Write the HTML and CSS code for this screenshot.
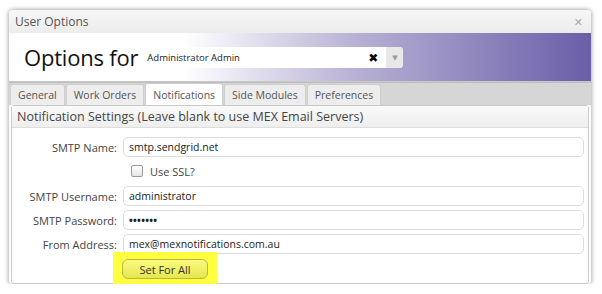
FILE: index.html
```html
<!DOCTYPE html>
<html lang="en">
<head>
    <meta charset="UTF-8">
    <title>User Options</title>
    <link rel="stylesheet" href="styles.css">
</head>
<body>
    <div class="dialog">
        <div class="titlebar">
            <span>User Options</span>
            <span class="close">&#x2715;</span>
        </div>

        <!-- header with user picker -->
        <div class="header">
            <span class="options-for">Options for</span>
            <div class="picker">
                <span class="picker-value">Administrator Admin</span>
                <span class="picker-clear">&#x2716;</span>
                <span class="picker-arrow">&#x25BC;</span>
            </div>
        </div>

        <div class="tabs">
            <div class="tab">General</div>
            <div class="tab">Work Orders</div>
            <div class="tab active">Notifications</div>
            <div class="tab">Side Modules</div>
            <div class="tab">Preferences</div>
        </div>

        <div class="panel">
            <div class="panel-head">Notification Settings (Leave blank to use MEX Email Servers)</div>
            <div class="form">
                <div class="row">
                    <label>SMTP Name:</label>
                    <div class="field">smtp.sendgrid.net</div>
                </div>
                <div class="row check-row">
                    <label></label>
                    <span class="checkbox"></span>
                    <span>Use SSL?</span>
                </div>
                <div class="row">
                    <label>SMTP Username:</label>
                    <div class="field">administrator</div>
                </div>
                <div class="row">
                    <label>SMTP Password:</label>
                    <div class="field dots">&#8226;&#8226;&#8226;&#8226;&#8226;&#8226;&#8226;</div>
                </div>
                <div class="row">
                    <label>From Address:</label>
                    <div class="field">mex@mexnotifications.com.au</div>
                </div>
                <div class="row button-row">
                    <label></label>
                    <div class="highlight">
                        <button>Set For All</button>
                    </div>
                </div>
            </div>
        </div>
    </div>
</body>
</html>
```

FILE: styles.css
```css
body { margin: 0; background: #fff; font-family: "Open Sans", "DejaVu Sans", sans-serif; color: #333; }
.dialog { margin: 10px 0 0 9px; width: 582px; height: 274px; border-radius: 4px; box-shadow: 0 0 5px rgba(0,0,0,0.45); background: #fff; overflow: hidden; }

.titlebar { height: 23px; display: flex; align-items: center; justify-content: space-between; padding: 0 8px 0 6px; background: linear-gradient(#f7f7f7, #ececec); font-size: 12px; color: #555; }
.close { font-size: 11px; color: #aaa; }

.header { height: 48px; display: flex; align-items: center; padding-left: 15px; background: linear-gradient(to right, #fff 30%, #b7b0d4 60%, #6a5ea8 100%); border-bottom: 1px solid #c8c8c8; }
.options-for { font-size: 22px; color: #111; margin-right: 5px; letter-spacing: -0.2px; }
.picker { display: flex; align-items: center; height: 21px; width: 260px; border-radius: 4px; background: #fff; overflow: hidden; }
.picker-value { flex: 1; font-size: 9.5px; padding-left: 4px; color: #222; }
.picker-clear { font-size: 12px; font-weight: bold; color: #000; margin-right: 8px; }
.picker-arrow { width: 17px; height: 21px; background: #e8e8e8; color: #999; font-size: 7px; display: flex; align-items: center; justify-content: center; }

.tabs { display: flex; height: 22px; padding: 0 0 0 1px; background: #d6d6d6; border-top: 1px solid #bdbdbd; align-items: flex-end; }
.tab { height: 20px; padding: 0 7px; margin-right: 1px; background: #ededed; border: 1px solid #cfcfcf; border-bottom: none; border-radius: 3px 3px 0 0; font-size: 10.5px; color: #555; display: flex; align-items: center; }
.tab.active { background: #fff; height: 21px; }

.panel { margin: 0 2px; border: 1px solid #c9c9c9; border-radius: 3px; height: 177px; }
.panel-head { height: 21px; display: flex; align-items: center; padding-left: 5px; background: linear-gradient(#fafafa, #eeeeee); border-bottom: 1px solid #dedede; font-size: 12.5px; color: #444; }
.form { padding-top: 9px; }

.row { display: flex; align-items: center; height: 20px; margin-bottom: 4px; }
.row label { width: 105px; text-align: right; font-size: 11px; color: #444; margin-right: 6px; }
.field { flex: 1; height: 18px; margin-right: 4px; border: 1px solid #dcdcdc; border-radius: 5px; display: flex; align-items: center; padding-left: 5px; font-size: 10.5px; color: #222; }
.dots { font-size: 10px; font-weight: bold; letter-spacing: 0.3px; }

.check-row { height: 18px; margin: 5px 0 6px; font-size: 11px; color: #444; }
.checkbox { width: 10px; height: 10px; border: 1px solid #999; border-radius: 2px; background: linear-gradient(#fff, #e6e6e6); margin: 0 7px 0 8px; }

.button-row { margin-top: -5px; height: 30px; }
.highlight { margin-left: -10px; padding: 5px 9px; background: #ffff40; }
.highlight button { width: 86px; height: 20px; border: 1px solid #b8b840; border-radius: 6px; background: linear-gradient(#fafa80, #e6e650); font-family: "Open Sans", sans-serif; font-size: 11px; color: #333; }
```
